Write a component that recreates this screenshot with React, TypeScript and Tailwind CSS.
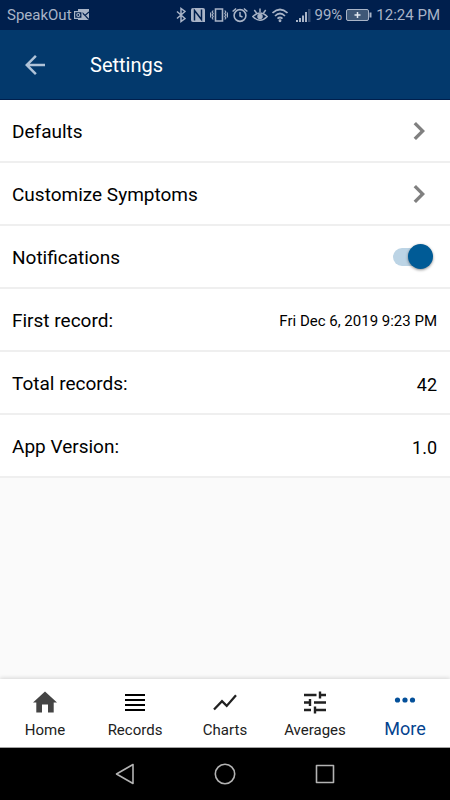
import { useState } from "react";
import type { ReactNode } from "react";
import clsx from "clsx";

interface RowProps {
  label: string;
  children: ReactNode;
}

interface TabProps {
  label: string;
  icon: ReactNode;
  active?: boolean;
}

const rowClass = "flex w-full items-center justify-between border-b-2 border-[#efefef] bg-white pl-3 pr-[13px] pt-1 h-[63px] text-left";

function InfoRow({ label, children }: RowProps) {
  return (
    <div className={rowClass}>
      <span>{label}</span>
      {children}
    </div>
  );
}

function LinkRow({ label }: { label: string }) {
  return (
    <button type="button" className={rowClass}>
      <span>{label}</span>
      <svg viewBox="0 0 24 24" className="mb-1 size-9 fill-[#808080]" aria-hidden="true">
        <path d="M10 6 8.4 7.5 12.9 12l-4.5 4.5L10 18l6-6z" />
      </svg>
    </button>
  );
}

function StatusBar() {
  return (
    <div className="flex h-[30px] items-center justify-between bg-[#001f4d] pl-[7px] pr-2.5 text-[#a9b4c7]">
      <div className="flex items-center gap-0.5">
        <span className="text-[15px]">SpeakOut</span>
        <svg viewBox="0 0 15 12" className="h-3 w-[15px]" aria-hidden="true">
          <path d="M4 0h11v11H4z" fill="currentColor" />
          <path d="M8 3.500l3 3L15 3M11.500 7l3.500 3.500" stroke="#001f4d" strokeWidth="1.200" fill="none" />
          <path d="M.6 2.600h7.400v6.800H.6z" fill="#001f4d" stroke="currentColor" strokeWidth="1.200" />
          <circle cx="4.300" cy="6" r="1.500" fill="none" stroke="currentColor" strokeWidth="1.200" />
        </svg>
      </div>
      <div className="flex items-center gap-1">
        <svg viewBox="0 0 10 16" className="h-4 w-2.5" fill="none" stroke="currentColor" strokeWidth="1.500" aria-hidden="true">
          <path d="M1 4.500l8 7L5 14.500v-13l4 3-8 7" />
        </svg>
        <svg viewBox="0 0 16 16" className="size-4" aria-hidden="true">
          <path d="M1 3q0-2 2-2h10q2 0 2 2v12H3q-2 0-2-2z" fill="currentColor" />
          <path d="M4.500 13.500V3.500l7 9V2.500" fill="none" stroke="#001f4d" strokeWidth="1.500" />
        </svg>
        <svg viewBox="0 0 18 16" className="h-4 w-[18px]" fill="none" stroke="currentColor" strokeWidth="1.600" aria-hidden="true">
          <path d="M5.500 2h7v12h-7z" />
          <path d="M3.200 3.500l-1 1.500 1 1.500-1 1.500 1 1.500-1 1.500 1 1.500M14.800 3.500l1 1.500-1 1.500 1 1.500-1 1.500 1 1.500-1 1.500M.6 5.500v5M17.400 5.500v5" strokeWidth="1.200" />
        </svg>
        <svg viewBox="0 0 16 16" className="size-4" fill="none" stroke="currentColor" strokeWidth="1.600" aria-hidden="true">
          <circle cx="8" cy="8.500" r="5.900" />
          <path d="M8 5v4l2.500 1M.6 4.500l3.500-3M15.400 4.500l-3.500-3" strokeWidth="1.500" />
        </svg>
        <svg viewBox="0 0 16 16" className="size-4" fill="none" stroke="currentColor" strokeWidth="1.500" aria-hidden="true">
          <path d="M.8 9.500Q8 2.500 15.200 9.500 8 17 .8 9.500zM8 5V1.500M4.500 6L2.300 3M11.500 6l2.200-3" />
          <circle cx="8" cy="9.500" r="2" fill="currentColor" />
        </svg>
        <svg viewBox="0 0 16 16" className="size-4" fill="none" stroke="currentColor" strokeWidth="1.700" aria-hidden="true">
          <path d="M.5 6q7.500-7 15 0M3 9q5-5 10 0M5.500 11.700q2.500-2.400 5 0" />
          <circle cx="8" cy="13.700" r=".6" fill="currentColor" />
        </svg>
        <svg viewBox="0 0 15 14" className="ml-1 h-3.5 w-[15px]" fill="currentColor" aria-hidden="true">
          <path d="M0 12h2v2H0zM3 10h2v4H3zM6 7.500h2V14H6zM9 4h2v10H9z" />
          <path d="M12 1h2.500v13H12z" opacity=".3" />
        </svg>
        <span className="text-[15px]">99%</span>
        <svg viewBox="0 0 26 12" className="h-3 w-[26px]" fill="none" stroke="currentColor" aria-hidden="true">
          <rect x=".5" y=".5" width="22" height="11" rx="1.500" fill="#3f5877" />
          <path d="M24.500 3.500v5" strokeWidth="2" />
          <path d="M11.500 3v6M8.500 6h6" stroke="#e2e8f0" strokeWidth="1.500" />
        </svg>
        <span className="text-[15px]">12:24 PM</span>
      </div>
    </div>
  );
}

function Tab({ label, icon, active }: TabProps) {
  return (
    <a
      href="#"
      aria-current={active ? "page" : undefined}
      className={clsx("flex flex-1 flex-col items-center pt-2.5", active ? "text-[#04438f]" : "text-[#212121]")}
    >
      {icon}
      <span className={clsx("leading-6", active ? "text-lg/6" : "pt-px text-[15px]")}>{label}</span>
    </a>
  );
}

const tabs: TabProps[] = [
  {
    label: "Home",
    icon: (
      <svg viewBox="0 0 28 28" className="size-7 fill-[#444]" aria-hidden="true">
        <path d="M14 2.500 26 13.500h-3.300v10H17v-8h-6v8H5.300v-10H2z" />
      </svg>
    ),
  },
  {
    label: "Records",
    icon: (
      <svg viewBox="0 0 28 28" className="size-7 fill-black" aria-hidden="true">
        <path d="M4 5h20v2H4zM4 10h20v2H4zM4 15h20v2H4zM4 20h20v2H4z" />
      </svg>
    ),
  },
  {
    label: "Charts",
    icon: (
      <svg viewBox="0 0 28 28" className="size-7" fill="none" stroke="currentColor" strokeWidth="2.300" aria-hidden="true">
        <path d="M3 20.500l8-8.300 4.700 4.700L25 6.300" />
      </svg>
    ),
  },
  {
    label: "Averages",
    icon: (
      <svg viewBox="0 0 28 28" className="size-7" fill="none" stroke="currentColor" strokeWidth="2.400" aria-hidden="true">
        <path d="M3 6h12.500M19 2.500v7M19 6h6M3 13.500h6M9 10v7M13 13.500h12M3 21h7M14 17.500v7M14 21h11" />
      </svg>
    ),
  },
  {
    label: "More",
    active: true,
    icon: (
      <svg viewBox="0 0 28 28" className="size-7 fill-[#04509a]" aria-hidden="true">
        <circle cx="6.500" cy="11" r="2.600" />
        <circle cx="14" cy="11" r="2.600" />
        <circle cx="21.500" cy="11" r="2.600" />
      </svg>
    ),
  },
];

export default function App() {
  const [notifications, setNotifications] = useState(true);

  return (
    <div className="flex min-h-screen flex-col bg-[#fafafa] font-[Roboto,sans-serif] text-black">
      <StatusBar />

      {/* Header */}
      <header className="flex h-[70px] items-center gap-10 border-b border-[#001f4d] bg-[#03396c] pt-px pl-5">
        <button type="button" aria-label="Back">
          <svg viewBox="0 0 24 24" className="size-[30px] fill-[#b0c3d8]" aria-hidden="true">
            <path d="M20 11H7.830l5.590-5.590L12 4l-8 8 8 8 1.410-1.410L7.830 13H20z" />
          </svg>
        </button>
        <h1 className="text-xl text-white">Settings</h1>
      </header>

      {/* Settings list */}
      <main className="flex-1 text-[19px]">
        <LinkRow label="Defaults" />
        <LinkRow label="Customize Symptoms" />
        <label className={rowClass}>
          <span>Notifications</span>
          <span className="relative mr-1 mb-1 flex h-[25px] w-10 items-center">
            <input
              type="checkbox"
              role="switch"
              checked={notifications}
              onChange={(e) => setNotifications(e.target.checked)}
              className="peer h-[18px] w-9 appearance-none rounded-full bg-gray-300 checked:bg-[#bcd4e5]"
            />
            <span className="pointer-events-none absolute left-0 size-[25px] rounded-full bg-gray-100 shadow-[0_1px_3px_rgba(0,0,0,0.45)] peer-checked:left-[15px] peer-checked:bg-[#005b96]" />
          </span>
        </label>
        <InfoRow label="First record:">
          <span className="text-[15px]">Fri Dec 6, 2019 9:23 PM</span>
        </InfoRow>
        <InfoRow label="Total records:">
          <span className="text-lg">42</span>
        </InfoRow>
        <InfoRow label="App Version:">
          <span className="text-lg">1.0</span>
        </InfoRow>
      </main>

      {/* Bottom tabs */}
      <nav className="flex h-[69px] border-b border-[#a3a3a3] bg-white shadow-[0_-1px_4px_rgba(0,0,0,0.15)]">
        {tabs.map((tab) => (
          <Tab key={tab.label} {...tab} />
        ))}
      </nav>

      {/* System navigation */}
      <div className="flex h-[52px] items-center justify-center gap-[76px] bg-black text-[#b3b3b3]">
        <button type="button" aria-label="System back">
          <svg viewBox="0 0 24 24" className="size-6" fill="none" stroke="currentColor" strokeWidth="1.600" strokeLinejoin="round" aria-hidden="true">
            <path d="M20 2.500v19L3.500 12z" />
          </svg>
        </button>
        <button type="button" aria-label="System home">
          <svg viewBox="0 0 24 24" className="size-6" fill="none" stroke="currentColor" strokeWidth="1.600" aria-hidden="true">
            <circle cx="12" cy="12" r="9.700" />
          </svg>
        </button>
        <button type="button" aria-label="Recent apps">
          <svg viewBox="0 0 24 24" className="size-6" fill="none" stroke="currentColor" strokeWidth="1.600" strokeLinejoin="round" aria-hidden="true">
            <path d="M3.500 3.500h17v17h-17z" />
          </svg>
        </button>
      </div>
    </div>
  );
}
